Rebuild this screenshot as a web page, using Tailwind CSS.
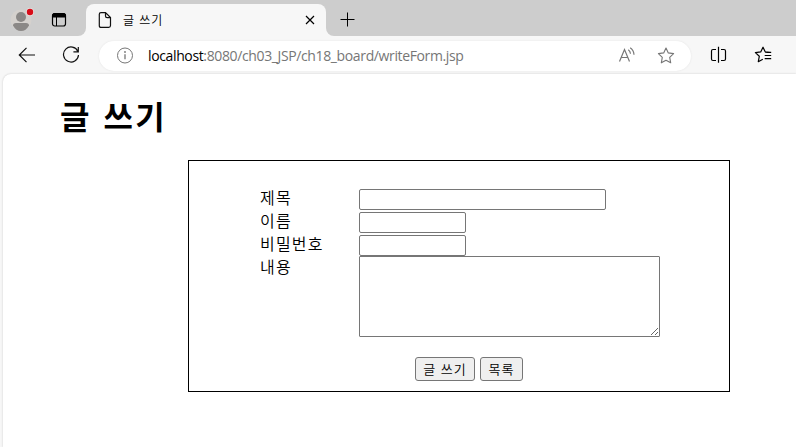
<!DOCTYPE html>
<html lang="ko">
<head>
<meta charset="utf-8">
<title>글 쓰기</title>
<script src="https://cdn.jsdelivr.net/npm/@tailwindcss/browser@4"></script>
</head>
<body class="w-[796px] h-[447px] overflow-hidden bg-[#f7f7f7] text-black font-['Noto_Sans_CJK_KR',sans-serif]">
<div class="flex flex-col h-[447px]">
  <!-- Tab strip -->
  <header class="flex h-9 bg-[#f7f7f7] shrink-0">
    <div class="w-[86px] h-9 bg-[#cdcdcd] rounded-br-lg flex items-center">
      <svg class="ml-[10px] mt-1 shrink-0" width="24" height="24" viewBox="0 0 24 24">
        <circle cx="11" cy="12" r="10.500" fill="#d5d1cd"/>
        <circle cx="11" cy="9" r="5" fill="#8b8886"/>
        <path d="M3 17.500Q3 15 6 15h10q3 0 3 2.500Q16 23 11 23T3 17.500z" fill="#8b8886"/>
        <circle cx="20" cy="4" r="3.900" fill="#e8e2e0"/>
        <circle cx="20" cy="4" r="3.200" fill="#d80c18"/>
      </svg>
      <svg class="ml-[17px] mt-[3px] shrink-0" width="16" height="16" viewBox="0 0 16 16" fill="none" stroke="#000">
        <rect x="1.500" y="1.500" width="13" height="12.500" rx="2.200" stroke-width="1.200"/>
        <path d="M1.500 5V3.500Q1.500 1.500 3.500 1.500h9q2 0 2 2V5z" fill="#000"/>
        <path d="M5.500 5v9"/>
      </svg>
    </div>
    <div class="w-[240px] h-9 pt-1 bg-[#cdcdcd]">
      <div class="flex items-center h-8 rounded-t-lg bg-[#f7f7f7]">
        <svg class="ml-[12px]" width="14" height="18" viewBox="0 0 14 18" fill="none" stroke="#111" stroke-width="1.200">
          <path d="M3 1.600h4.500l5 5v8q0 1.800-1.800 1.800H3q-1.700 0-1.700-1.700V3.300Q1.300 1.600 3 1.600zM7.500 1.800v3.200q0 1.600 1.600 1.600h3.200"/>
        </svg>
        <span class="ml-[11px] text-[12px] leading-4 tracking-[0.900px] font-[350] -mt-px">글 쓰기</span>
        <svg class="ml-auto mr-[11px]" width="10" height="10" viewBox="0 0 10 10" stroke="#000" stroke-width="1.200"><path d="M1 1l8 8M9 1l-8 8"/></svg>
      </div>
    </div>
    <div class="flex-1 bg-[#cdcdcd] rounded-bl-lg">
      <svg class="ml-[14px] mt-[12px]" width="15" height="15" viewBox="0 0 15 15" stroke="#000"><path d="M.500 7.500h14M7.500 .500v14"/></svg>
    </div>
  </header>
  <!-- Address row -->
  <nav class="flex items-center h-[38px] pb-px shrink-0 bg-[#f7f7f7]">
    <svg class="ml-[18px]" width="18" height="16" viewBox="0 0 18 16" fill="none" stroke="#111" stroke-width="1.200"><path d="M17 8H1.300M8.500 .900L1.300 8l7.200 7.100"/></svg>
    <svg class="ml-[26px]" width="18" height="18" viewBox="0 0 18 18" fill="none" stroke="#111" stroke-width="1.200"><path d="M15.900 5.500A7.500 7.500 0 1 0 16.500 9M16.300 1v4.800h-4.900"/></svg>
    <div class="ml-[19px] mt-0.5 flex items-center w-[592px] h-[30px] rounded-full bg-white shadow-[0_0_2px_#e2e2e2]">
      <svg class="ml-[17px]" width="17" height="17" viewBox="0 0 17 17" fill="none" stroke="#767676"><circle cx="9" cy="8.500" r="7.500"/><path d="M9 7.300v5" stroke-width="1.300"/><circle cx="9" cy="5" r=".9" fill="#767676" stroke="none"/></svg>
      <span class="ml-[15px] w-[317px] whitespace-nowrap text-[14px] leading-5 font-['Open_Sans',sans-serif] tracking-[-0.370px] text-[#767676]"><span class="text-black">localhost</span>:8080/ch03_JSP/ch18_board/writeForm.jsp</span>
      <svg class="ml-[153px] shrink-0" width="18" height="17" viewBox="0 0 18 17" fill="none" stroke="#767676" stroke-width="1.200"><path d="M1.500 14.500L6.500 2.500l5 12M3.200 10.500h6.600M10.300 2.700q2 1.400 2.200 4M12.200 .800q3.600 2.500 3.800 7"/></svg>
      <svg class="ml-[21px] shrink-0" width="18" height="17" viewBox="0 0 18 17" fill="none" stroke="#767676" stroke-width="1.100" stroke-linejoin="round"><path d="M9 1l2.300 4.900 5.300.7-3.900 3.700 1 5.500L9 13.200l-4.700 2.600 1-5.500L1.400 6.600l5.300-.7z"/></svg>
    </div>
    <svg class="ml-[19px]" width="17" height="18" viewBox="0 0 17 18" fill="none" stroke="#000" stroke-width="1.200"><path d="M6 3.500H3Q1.500 3.500 1.500 5v8Q1.500 14.500 3 14.500h3M11 3.500h3q1.500 0 1.500 1.500v8q0 1.500-1.500 1.500h-3M8.500 .800v16"/></svg>
    <svg class="ml-[27px]" width="18" height="17" viewBox="0 0 18 17" fill="none" stroke="#000" stroke-width="1.200" stroke-linejoin="round"><path d="M16 6.300l-4.800-.5L9 1.200 6.700 5.900l-5.300.7 3.900 3.700-1 5.400 4.500-2.500M11.200 6.300h6M10.700 9.500h6.500M10.700 12.700h6.500"/></svg>
  </nav>
  <!-- Page -->
  <main class="ml-[3px] flex-1 bg-white rounded-tl-lg shadow-[0_0_2px_#c4c4c4] overflow-hidden">
    <h1 class="ml-[57px] mt-[18px] h-[46px] leading-[46px] text-[32px] font-bold tracking-[2.500px] whitespace-nowrap">글 쓰기</h1>
    <form class="ml-[185px] mt-[22px] w-[542px] h-[232px] border border-black">
      <div class="grid grid-cols-[99px_1fr] auto-rows-[23px] ml-[71px] pt-[27px] text-[16px] leading-[19px] tracking-[1.200px] font-[350]">
        <label>제목</label><div class="pt-px"><input class="block w-[247px] h-[21px] border border-[#767676] rounded-xs"></div>
        <label>이름</label><div class="pt-px"><input class="block w-[107px] h-[21px] border border-[#767676] rounded-xs"></div>
        <label>비밀번호</label><div class="pt-px"><input type="password" class="block w-[107px] h-[21px] border border-[#767676] rounded-xs"></div>
        <label>내용</label><div class="-mt-px"><textarea class="block w-[301px] h-[81px] border border-[#767676] rounded-[1px] resize"></textarea></div>
      </div>
      <div class="mt-[77px] ml-[226px] flex gap-[5px] text-[13px] leading-[22px] tracking-[1px]">
        <button type="button" class="w-[60px] h-6 bg-[#efefef] border border-[#767676] rounded-[3px] whitespace-nowrap font-[350]">글 쓰기</button>
        <button type="button" class="w-[43px] h-6 bg-[#efefef] border border-[#767676] rounded-[3px] whitespace-nowrap font-[350]">목록</button>
      </div>
    </form>
  </main>
</div>
</body>
</html>
